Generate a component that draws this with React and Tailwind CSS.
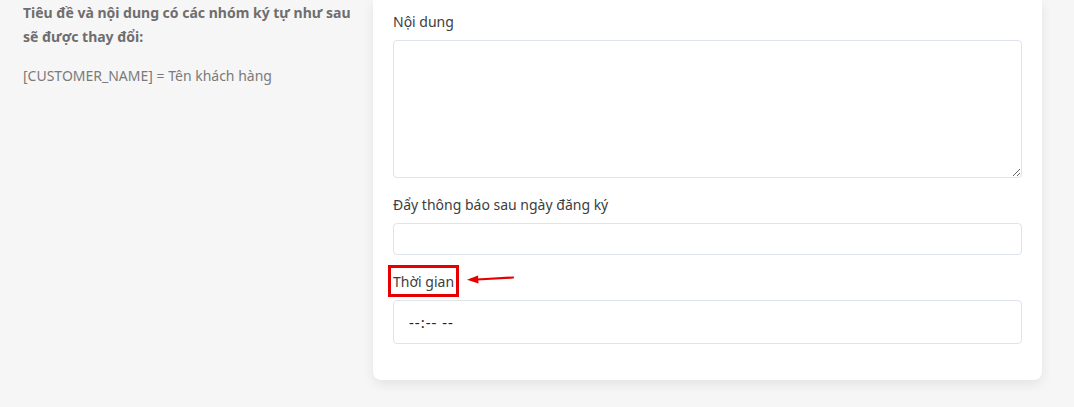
import React from 'react';

// Form field label + input wrapper
const Field = ({ label, className = '', children }) => (
  <div className={className}>
    <label className="block text-[14px] text-[#3d3d3d] mb-[8px]">{label}</label>
    {children}
  </div>
);

const App = () => {
  return (
    <div
      className="w-[1074px] h-[407px] bg-[#f6f6f6] flex overflow-hidden"
      style={{ fontFamily: '"Noto Sans", "Open Sans", sans-serif' }}
    >
      {/* Left help column */}
      <div className="w-[373px] shrink-0 pl-[23px] pr-[20px] pt-[1px]">
        <p className="text-[14px] font-bold text-[#6e6e6e] leading-[24px] w-[330px]">
          Tiêu đề và nội dung có các nhóm ký tự như sau sẽ được thay đổi:
        </p>
        <p className="text-[14px] text-[#7a7a7a] mt-[17px] leading-[20px]">
          [CUSTOMER_NAME] = Tên khách hàng
        </p>
      </div>

      {/* Form card */}
      <div className="w-[669px] h-[380px] bg-white rounded-b-lg shadow-[0_4px_12px_rgba(0,0,0,0.08)] px-[20px] pt-[11px]">
        <Field label="Nội dung" className="mb-[16px]">
          <textarea className="block w-full h-[138px] border border-[#dfe3ec] rounded-[4px] resize-y" />
        </Field>
        <Field label="Đẩy thông báo sau ngày đăng ký" className="mb-[10px]">
          <input className="block w-full h-[32px] border border-[#dfe3ec] rounded-[4px]" />
        </Field>
        <div>
          {/* Highlighted label with annotation arrow */}
          <div className="flex items-center -ml-[5px] mb-[3px]">
            <span className="border-[3px] border-[#e60000] px-[2px] h-[32px] flex items-center text-[14px] text-[#3d3d3d]">
              Thời gian
            </span>
            <svg width="50" height="12" viewBox="0 0 50 12" className="ml-[6px] -mt-[4px]">
              <path d="M12 6.5 L48 4.5" stroke="#e60000" strokeWidth="2.2" strokeLinecap="round" />
              <path d="M2 6.8 L13 2.5 L13.5 10.5 Z" fill="#e60000" />
            </svg>
          </div>
          <div className="w-full h-[44px] border border-[#dfe3ec] rounded-[4px] flex items-center pl-[15px] text-[15px] text-[#222] tracking-[1px]">
            --:-- --
          </div>
        </div>
      </div>
    </div>
  );
};

export default App;
